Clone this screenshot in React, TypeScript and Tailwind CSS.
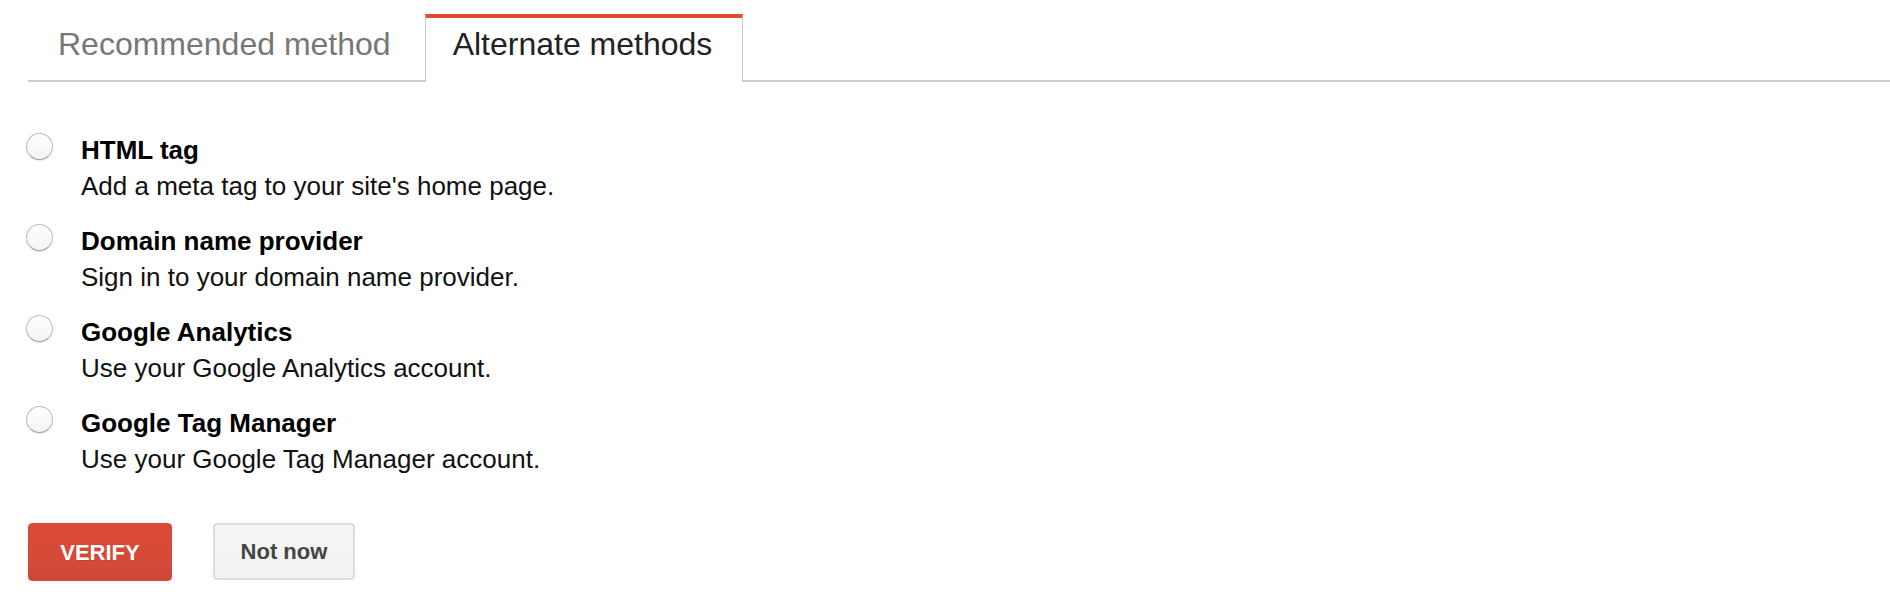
const methods = [
  { title: 'HTML tag', desc: "Add a meta tag to your site's home page." },
  { title: 'Domain name provider', desc: 'Sign in to your domain name provider.' },
  { title: 'Google Analytics', desc: 'Use your Google Analytics account.' },
  { title: 'Google Tag Manager', desc: 'Use your Google Tag Manager account.' },
];

const Radio = () => (
  <span className="mt-[1px] block h-[27px] w-[27px] shrink-0 rounded-full border border-[#bdbdbd] border-b-[#a0a0a0] bg-gradient-to-b from-white to-[#f4f4f4] shadow-[0_1px_1px_rgba(0,0,0,0.1)]" />
);

export default function App() {
  return (
    <div className="min-h-screen bg-white text-[#222]" style={{ fontFamily: '"Liberation Sans", Arial, sans-serif' }}>
      <div className="pl-[28px] pt-[14px]">
        <div className="flex border-b-2 border-[#cccccc] text-[32px]">
          <div className="border-t-4 border-transparent pb-[9px] pl-[30px] pr-[34px] leading-[53px] text-[#777]">
            Recommended method
          </div>
          <div className="-mb-[2px] border-x border-t-4 border-x-[#cccccc] border-t-[#dd4b39] bg-white pb-[11px] pl-[27px] pr-[30px] leading-[53px] text-[#222]">
            Alternate methods
          </div>
        </div>
      </div>

      <div className="mt-[50px] flex flex-col gap-[19px] pl-[26px]">
        {methods.map(m => (
          <label key={m.title} className="flex gap-[28px]">
            <Radio />
            <div className="text-[26px] leading-[36px]">
              <div className="font-bold text-black">{m.title}</div>
              <div className="text-[#111]">{m.desc}</div>
            </div>
          </label>
        ))}
      </div>

      <div className="mt-[46px] flex items-start gap-[41px] pl-[28px]">
        <button
          type="button"
          className="h-[58px] w-[144px] rounded-[4px] border border-[#d14836] bg-gradient-to-b from-[#dd4b39] to-[#d14836] text-[22px] font-bold text-white [text-shadow:0_1px_rgba(0,0,0,0.15)]"
        >
          VERIFY
        </button>
        <button
          type="button"
          className="h-[57px] w-[142px] rounded-[4px] border-2 border-[#dcdcdc] bg-gradient-to-b from-[#f5f5f5] to-[#f1f1f1] text-[22px] font-bold text-[#444]"
        >
          Not now
        </button>
      </div>
    </div>
  );
}
